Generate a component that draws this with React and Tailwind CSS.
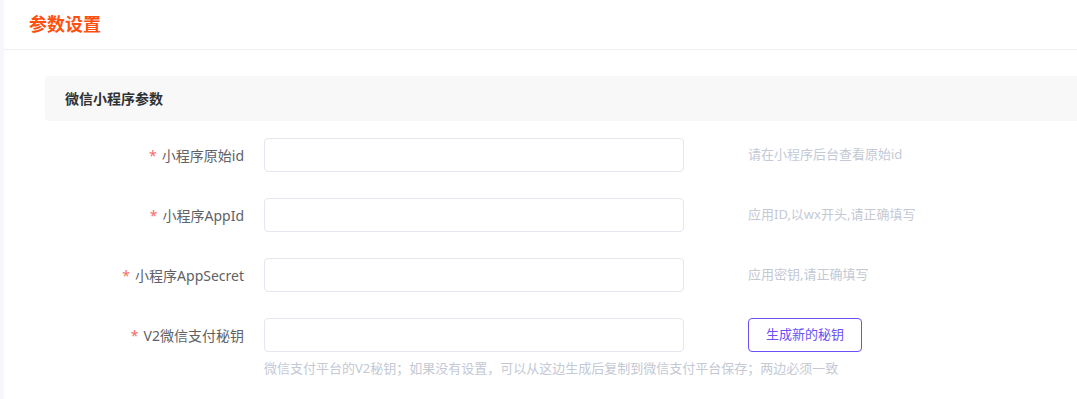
export default function App() {
  const rows = [
    { label: "小程序原始id", hint: "请在小程序后台查看原始id" },
    { label: "小程序AppId", hint: "应用ID,以wx开头,请正确填写" },
    { label: "小程序AppSecret", hint: "应用密钥,请正确填写" },
  ];
  return (
    <div
      className="flex min-h-[399px] w-[1077px] overflow-hidden bg-[#f5f7fa]"
      style={{ fontFamily: '"Noto Sans", "Noto Sans CJK SC", sans-serif' }}
    >
      <div className="ml-[4px] flex-1 bg-white">
        <div className="flex h-[50px] items-center border-b border-[#f0f0f0] pl-[25px]">
          <span className="text-[18px] font-bold text-[#ff5010]">参数设置</span>
        </div>
        <div className="pl-[41px] pt-[26px]">
          <div className="flex h-[45px] items-center rounded-l-[4px] bg-[#f8f8f8] pl-[20px]">
            <span className="text-[14px] font-bold text-[#303133]">微信小程序参数</span>
          </div>
          <div className="flex flex-col gap-[26px] pt-[17px]">
            {rows.map((r) => (
              <div key={r.label} className="flex items-center">
                <div className="w-[219px] pr-[20px] text-right text-[14px] text-[#606266]">
                  <span className="mr-[5px] text-[#f56c6c]">*</span>
                  {r.label}
                </div>
                <div className="h-[34px] w-[420px] rounded-[4px] border border-[#e4e7ed] bg-white" />
                <div className="ml-[64px] text-[13px] text-[#c4c9d4]">{r.hint}</div>
              </div>
            ))}
            <div className="flex flex-col">
              <div className="flex items-center">
                <div className="w-[219px] pr-[20px] text-right text-[14px] text-[#606266]">
                  <span className="mr-[5px] text-[#f56c6c]">*</span>
                  V2微信支付秘钥
                </div>
                <div className="h-[34px] w-[420px] rounded-[4px] border border-[#e4e7ed] bg-white" />
                <button className="ml-[64px] flex h-[34px] w-[114px] items-center justify-center rounded-[4px] border border-[#6e4ff6] bg-white text-[13px] text-[#6e4ff6]">
                  生成新的秘钥
                </button>
              </div>
              <div className="ml-[219px] mt-[7px] text-[13px] leading-[18px] text-[#c4c9d4]">
                微信支付平台的V2秘钥；如果没有设置，可以从这边生成后复制到微信支付平台保存；两边必须一致
              </div>
            </div>
          </div>
        </div>
      </div>
    </div>
  );
}
